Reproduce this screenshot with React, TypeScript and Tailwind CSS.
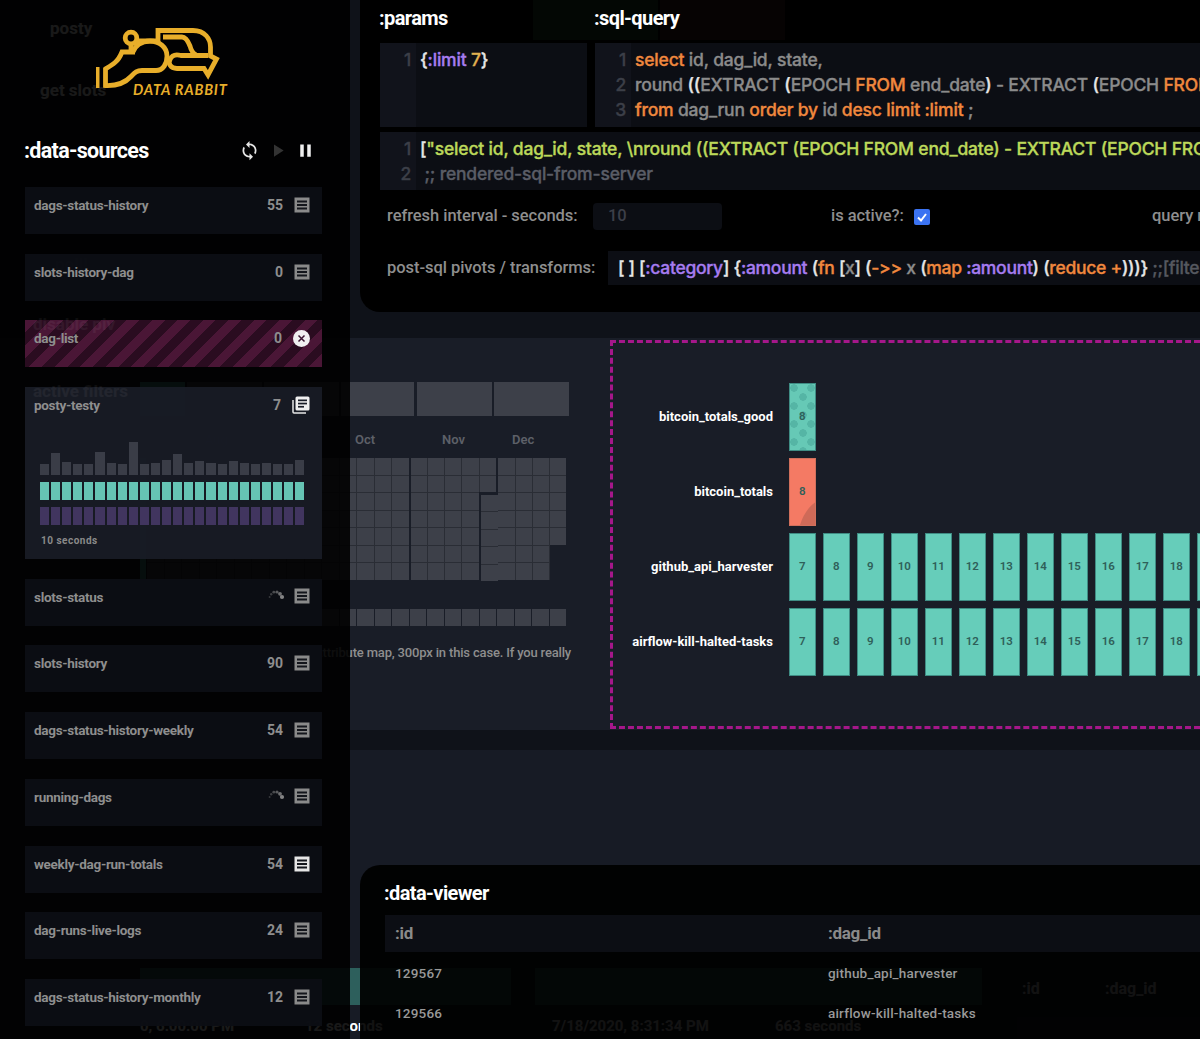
import React from "react";
import { MdSync, MdPause, MdPlayArrow } from "react-icons/md";

const code = "font-['Inter',sans-serif] font-medium text-[17.500px] leading-[25px] tracking-[-0.18px] [-webkit-text-stroke:0.35px_currentColor]";
const ui = "font-['Roboto',sans-serif]";

function Sheet({ bright = false }: { bright?: boolean }) {
  const c = bright ? "#e6e6e6" : "#8a8a8a";
  return (
    <svg width="16" height="16" viewBox="0 0 16 16" className="shrink-0">
      <rect x="0.5" y="0.5" width="15" height="15" fill={c} />
      <rect x="3" y="3.5" width="10" height="2" fill="#14161c" />
      <rect x="3" y="7" width="10" height="2" fill="#14161c" />
      <rect x="3" y="10.5" width="10" height="2" fill="#14161c" />
    </svg>
  );
}

function Copy() {
  return (
    <svg width="18" height="18" viewBox="0 0 18 18" className="shrink-0">
      <path d="M1 4v12a1 1 0 0 0 1 1h12" stroke="#e8e8e8" strokeWidth="1.5" fill="none" />
      <rect x="3.5" y="0.5" width="14" height="14" rx="1.5" fill="#f0f0f0" />
      <rect x="6" y="3.5" width="9" height="1.7" fill="#191d27" />
      <rect x="6" y="6.7" width="9" height="1.7" fill="#191d27" />
      <rect x="6" y="9.9" width="6" height="1.7" fill="#191d27" />
    </svg>
  );
}

function Spinner() {
  const dots = [
    [15, 8, 2.1, 0.85],
    [13, 4.8, 1.9, 0.7],
    [10, 3, 1.6, 0.55],
    [6.8, 3.2, 1.4, 0.45],
    [4.2, 5.2, 1.2, 0.35],
    [2.6, 8, 1, 0.3],
  ];
  return (
    <svg width="18" height="14" viewBox="0 0 18 14" className="shrink-0">
      {dots.map(([x, y, r, o], i) => (
        <circle key={i} cx={x} cy={y} r={r} fill="#9a9a9a" opacity={o} />
      ))}
    </svg>
  );
}

function Closer() {
  return (
    <svg width="17" height="17" viewBox="0 0 17 17" className="shrink-0">
      <circle cx="8.5" cy="8.5" r="8.5" fill="#f0f0f0" />
      <path d="M5.5 5.5l6 6M11.5 5.5l-6 6" stroke="#3a1530" strokeWidth="1.5" />
    </svg>
  );
}

function Logo() {
  const g = "#e8ae2a";
  return (
    <div className="relative ml-[-25px] h-[130px]">
      <svg width="240" height="100" viewBox="0 0 240 100" className="absolute left-0 top-0">
        <g fill="none" stroke={g} strokeWidth="4.8" strokeLinejoin="miter">
          <circle cx="131" cy="38" r="5.8" />
          <path d="M131 44V52" />
          <path d="M137 41H158V30.500H193C205 30.500 210.500 39 210.500 47V56L216.500 59L208 75L204 68.500H177C170 68.500 168 63 170 59.500C172 55 176 54 181 55.500H208" />
          <path d="M163 37H182C186 37 188 41 190 46C191 50 192 53 196 55" />
          <path d="M135 52H122C120 57 118 60 115 62.500C112 65 107 68 105.500 69V85.500C118 86 125 83 131 76.500C135 72 137 70.500 142 70.500H156C163 70.500 167 64 167 56C167 47 159 41 150 41C141 41 135 46 133 52" />
        </g>
        <rect x="96" y="67" width="3.500" height="21" fill={g} />
      </svg>
      <span className="absolute left-[133px] top-[81px] font-['Lato',sans-serif] text-[14.500px] font-bold italic leading-[18px] tracking-[0.8px] text-[#e8ae2a]">DATA RABBIT</span>
    </div>
  );
}

function Card({ name, count, icon, className = "", ghost }: { name: string; count?: string; icon: React.ReactNode; className?: string; ghost?: string }) {
  return (
    <div className={"relative flex h-[47px] items-start justify-between pl-[9px] pr-[12px] pt-[9px] " + className}>
      {ghost && <span className={ui + " absolute left-[8px] top-[-6px] text-[17px] font-bold leading-[20px] text-white/[.05]"}>{ghost}</span>}
      <span className={ui + " relative text-[13.500px] font-bold leading-[18px] tracking-[-0.3px] text-[#8e8e8e]"}>{name}</span>
      <div className="flex items-center gap-[11px]">
        {count !== undefined && <span className={ui + " text-[14px] font-bold leading-[18px] text-[#8e8e8e]"}>{count}</span>}
        {icon}
      </div>
    </div>
  );
}

const barHeights = [11, 22, 13, 11, 11, 23, 12, 11, 33, 11, 12, 15, 21, 12, 14, 12, 11, 14, 12, 11, 12, 11, 11, 15];

function Sidebar() {
  const base = "bg-[#0c0e14]/95";
  return (
    <aside className="absolute left-0 top-0 h-[1039px] w-[350px] bg-black/90 pl-[25px]">
      <Logo />
      <div className="mb-[17px] flex h-[40px] w-[297px] items-center justify-between pr-[6px]">
        <h2 className={ui + " ml-[-1px] mt-[2px] text-[21.500px] font-bold tracking-[-0.7px] text-white"}>:data-sources</h2>
        <div className="flex items-center gap-[7px]">
          <MdSync className="text-[21px] text-[#e6e6e6]" />
          <MdPlayArrow className="text-[21px] text-[#333]" />
          <MdPause className="text-[21px] text-[#f0f0f0]" />
        </div>
      </div>
      <div className="flex w-[297px] flex-col gap-[19.700px]">
        <Card className={base} name="dags-status-history" count="55" icon={<Sheet />} />
        <Card className={base} name="slots-history-dag" count="0" icon={<Sheet />} />
        <Card
          className="bg-[repeating-linear-gradient(135deg,#4a1636_0,#4a1636_9px,#2a0c20_9px,#2a0c20_18px)]"
          name="dag-list"
          count="0"
          icon={<Closer />}
          ghost="disable piv"
        />
        <div className="flex h-[172px] flex-col bg-[#191d27]/90">
          <Card name="posty-testy" count="7" icon={<Copy />} className="!h-[33px]" ghost="active filters" />
          <div className="ml-[15px] mt-[22px] flex h-[33px] items-end gap-[2px]">
            {barHeights.map((h, i) => (
              <div key={i} className="w-[9.100px] bg-[#3a3d47]" style={{ height: h }} />
            ))}
          </div>
          <div className="ml-[15px] mt-[7px] flex gap-[2px]">
            {barHeights.map((_, i) => (
              <div key={i} className="h-[18px] w-[9.100px] bg-[#66c4b4]" />
            ))}
          </div>
          <div className="ml-[15px] mt-[7px] flex gap-[2px]">
            {barHeights.map((_, i) => (
              <div key={i} className="h-[18px] w-[9.100px] bg-[#41355f]" />
            ))}
          </div>
          <span className="ml-[16px] mt-[9px] font-['Roboto',sans-serif] text-[10px] font-bold leading-[14px] tracking-[0.5px] text-[#8a8a8a]">10 seconds</span>
        </div>
        <Card className={base} name="slots-status" icon={<><Spinner /><span className="ml-[-2px]"><Sheet /></span></>} />
        <Card className={base} name="slots-history" count="90" icon={<Sheet />} />
        <Card className={base} name="dags-status-history-weekly" count="54" icon={<Sheet />} />
        <Card className={base} name="running-dags" icon={<><Spinner /><span className="ml-[-2px]"><Sheet /></span></>} />
        <Card className={base} name="weekly-dag-run-totals" count="54" icon={<Sheet bright />} />
        <Card className={base} name="dag-runs-live-logs" count="24" icon={<Sheet />} />
        <Card className={base} name="dags-status-history-monthly" count="12" icon={<Sheet />} />
      </div>
    </aside>
  );
}

function Editor({ lines, gutter = 36, className = "" }: { lines: React.ReactNode[]; gutter?: number; className?: string }) {
  return (
    <div className={"flex overflow-hidden bg-[#0c0e14] " + className}>
      <div className="flex shrink-0 flex-col items-end bg-[#11131b] pr-[5px] pt-[4px]" style={{ width: gutter }}>
        {lines.map((_, i) => (
          <span key={i} className={code + " text-[#3c3f48]"}>{i + 1}</span>
        ))}
      </div>
      <div className="flex min-w-0 flex-1 flex-col pl-[4px] pt-[4px]">
        {lines.map((l, i) => (
          <div key={i} className={code + " whitespace-nowrap text-[#8b8b8b]"}>{l}</div>
        ))}
      </div>
    </div>
  );
}

const O = ({ children }: { children: React.ReactNode }) => <span className="text-[#f0883e]">{children}</span>;
const W = ({ children }: { children: React.ReactNode }) => <span className="text-[#e6e6e6]">{children}</span>;
const P = ({ children }: { children: React.ReactNode }) => <span className="text-[#a67cf0]">{children}</span>;
const G = ({ children }: { children: React.ReactNode }) => <span className="text-[#bcd85a]">{children}</span>;

function TopPanel() {
  return (
    <section className="ml-[360px] h-[312px] w-[840px] overflow-hidden rounded-bl-[20px] bg-black">
      <div className="relative flex h-[43px] items-start pl-[19px]">
        <div className="absolute left-[173px] top-0 h-[40px] w-[125px] bg-[#030704]" />
        <div className="absolute left-[300px] top-0 h-[40px] w-[125px] bg-[#060303]" />
        <h2 className={ui + " relative mt-[4px] w-[215px] text-[20px] font-bold leading-[28px] tracking-[-0.6px] text-white"}>:params</h2>
        <h2 className={ui + " relative mt-[4px] text-[20px] font-bold leading-[28px] tracking-[-0.6px] text-white"}>:sql-query</h2>
      </div>
      <div className="ml-[20px] flex h-[84px] gap-[8px]">
        <Editor
          className="w-[207px]"
          lines={[<><W>{"{"}</W><P>:limit</P> <span className="text-[#e0b050]">7</span><W>{"}"}</W></>]}
        />
        <Editor
          className="min-w-0 flex-1"
          lines={[
            <><O>select</O> id, dag_id, state,</>,
            <>round <W>((</W>EXTRACT <W>(</W>EPOCH <O>FROM</O> end_date<W>)</W> - EXTRACT <W>(</W>EPOCH <O>FROM</O> start_date<W>)))</W></>,
            <><O>from</O> dag_run <O>order by</O> id <O>desc limit :limit</O> ;</>,
          ]}
        />
      </div>
      <Editor
        className="ml-[20px] mt-[5px] h-[58px]"
        lines={[
          <><W>[</W><G>"select id, dag_id, state, \nround ((EXTRACT (EPOCH FROM end_date) - EXTRACT (EPOCH FROM start_date)))"</G></>,
          <span className="text-[#5a5d66]">&nbsp;;; rendered-sql-from-server</span>,
        ]}
      />
      <div className={ui + " ml-[27px] mt-[13px] flex h-[27px] items-center text-[16.500px] font-medium tracking-[-0.05px] text-[#8e8e8e]"}>
        <span className="w-[206px] shrink-0">refresh interval - seconds:</span>
        <div className="flex h-[27px] w-[129px] shrink-0 items-center rounded-[4px] bg-[#0c0e14] pl-[15px] text-[#3c3f48]">10</div>
        <span className="ml-[109px] w-[83px] shrink-0">is active?:</span>
        <div className="flex h-[16px] w-[16px] shrink-0 items-center justify-center rounded-[2px] bg-[#3b73f2]">
          <svg width="12" height="12" viewBox="0 0 12 12">
            <path d="M2 6.500L5 9.500L10 3" stroke="white" strokeWidth="2" fill="none" />
          </svg>
        </div>
        <span className="ml-[222px] shrink-0 whitespace-nowrap">query result</span>
      </div>
      <div className="ml-[27px] mt-[21px] flex h-[34px] items-center">
        <span className={ui + " w-[221px] shrink-0 text-[16.500px] font-medium tracking-[-0.05px] text-[#8e8e8e]"}>post-sql pivots / transforms:</span>
        <div className={code + " flex h-[34px] min-w-0 flex-1 items-center whitespace-nowrap bg-[#0c0e14] pb-[2px] pl-[10px] !tracking-[-0.28px] text-[#8b8b8b]"}>
          <W>[ ] [</W><P>:category</P><W>] {"{"}</W><P>:amount</P>&nbsp;<W>(</W><O>fn</O>&nbsp;<W>[</W>x<W>]</W>&nbsp;<W>(</W><O>-&gt;&gt;</O>&nbsp;x&nbsp;<W>(</W><O>map</O>&nbsp;<P>:amount</P><W>)</W>&nbsp;<W>(</W><O>reduce +</O><W>))){"}"}</W>&nbsp;<span className="text-[#55585f]">;;[filter</span>
        </div>
      </div>
    </section>
  );
}

function Stack({ n, narrow = false }: { n: number; narrow?: boolean }) {
  return (
    <div className="flex flex-col gap-px self-start bg-[#2a2d35]">
      {Array.from({ length: n }, (_, i) => (
        <div key={i} className={(narrow ? "w-[16.250px]" : "w-[16.500px]") + " h-[16.500px] bg-[#3d4049]"} />
      ))}
    </div>
  );
}

function HeatCol({ n, narrow = false }: { n: number; narrow?: boolean }) {
  return (
    <div className="self-start bg-[#2a2d35] pr-px">
      <Stack n={n} narrow={narrow} />
    </div>
  );
}

const months = [
  { t: "Aug", w: 78 },
  { t: "Sep", w: 72 },
  { t: "Oct", w: 87 },
  { t: "Nov", w: 70 },
  { t: "Dec", w: 40 },
];

function Heatmap() {
  return (
    <div className="relative w-[610px] shrink-0 pl-[140px] pt-[44px]">
      <div className="flex h-[34px] gap-[2px]">
        <div className="w-[45px] bg-[#3f8c84]" />
        <div className="w-[75px] bg-[#3d4049]" />
        <div className="w-[75px] bg-[#3d4049]" />
        <div className="w-[73px] bg-[#3d4049]" />
        <div className="ml-[1px] w-[75px] bg-[#3d4049]" />
        <div className="w-[75px] bg-[#3d4049]" />
      </div>
      <div className={ui + " mt-[15px] flex h-[17px] pl-[65px] text-[13px] font-semibold leading-[17px] text-[#5d6068]"}>
        {months.map((m) => (
          <span key={m.t} style={{ width: m.w }}>{m.t}</span>
        ))}
      </div>
      <div className="mt-[10px] flex h-[121px]">
        <div className="mr-px h-[121px] w-[6px] bg-[#3f8c84]" />
        {Array.from({ length: 14 }, (_, i) => <HeatCol key={i} n={7} />)}
        <Stack n={7} />
        <div className="ml-[2.200px] flex">
          <HeatCol n={7} narrow />
          <HeatCol n={7} narrow />
          <HeatCol n={7} narrow />
          <Stack n={7} narrow />
        </div>
        <div className="flex w-[19.800px] shrink-0 flex-col gap-[2.500px]">
          <div className="w-[17.500px] bg-[#2a2d35] pl-[1.250px]"><Stack n={2} narrow /></div>
          <div className="ml-[2.600px]"><HeatCol n={5} narrow /></div>
        </div>
        <div className="flex">
          <HeatCol n={7} narrow />
          <HeatCol n={7} narrow />
          <HeatCol n={7} narrow />
          <Stack n={5} narrow />
        </div>
      </div>
      <div className="mt-[30px] flex gap-px pl-[7px]">
        {Array.from({ length: 24 }, (_, i) => <div key={i} className="h-[16.500px] w-[16.500px] bg-[#3d4049]" />)}
      </div>
      <p className={ui + " mt-[17px] w-[440px] text-[13px] font-medium leading-[20px] tracking-[-0.17px] text-[#8e8e8e]"}>
        all width, you can do it with the attribute map, 300px in this case. If you really need...
      </p>
    </div>
  );
}

const nums = Array.from({ length: 13 }, (_, i) => i + 7);

function Bar({ v, className = "", children }: { v: number; className?: string; children?: React.ReactNode }) {
  return (
    <div className={"relative flex h-[68px] w-[26.500px] shrink-0 items-center justify-center overflow-hidden border border-[#3f8c84] " + className}>
      {children}
      <span className={ui + " relative text-[11.500px] font-semibold text-[#2f5f59]"}>{v}</span>
    </div>
  );
}

function Row({ label, children }: { label: string; children: React.ReactNode }) {
  return (
    <div className="flex h-[68px] items-center">
      <span className={ui + " w-[160px] shrink-0 whitespace-nowrap text-right text-[13px] font-bold text-white"}>{label}</span>
      <div className="ml-[16px] flex gap-[7.500px]">{children}</div>
    </div>
  );
}

function Chart() {
  return (
    <div className="mt-[2px] h-[389px] min-w-0 flex-1 overflow-hidden border-[3px] border-r-0 border-dashed border-[#a5178a] pt-[40px]">
      <div className="flex flex-col gap-[7px]">
        <Row label="bitcoin_totals_good">
          <Bar v={8} className="bg-[#66c9b6] bg-[radial-gradient(circle_at_4px_4px,#55b5a5_3.500px,transparent_4px),radial-gradient(circle_at_13px_13px,#55b5a5_3.500px,transparent_4px)] bg-[length:17px_18px]" />
        </Row>
        <Row label="bitcoin_totals">
          <Bar v={8} className="border-[#d0705c] bg-[#f47a64]">
            <svg className="absolute inset-0" width="26" height="66" viewBox="0 0 26 66">
              <path d="M10 66C13 56 19 47 26 43V66Z" fill="#cf6a58" />
            </svg>
          </Bar>
        </Row>
        <Row label="github_api_harvester">
          {nums.map((n) => <Bar key={n} v={n} className="bg-[#66cdba]" />)}
        </Row>
        <Row label="airflow-kill-halted-tasks">
          {nums.map((n) => <Bar key={n} v={n} className="bg-[#66cdba]" />)}
        </Row>
      </div>
    </div>
  );
}

function Ghost() {
  return (
    <div className="relative h-[289px] bg-[#171b25]">
      <div className="absolute left-[140px] top-[218px] h-[37px] w-[371px] bg-[#2d5f5c]" />
      <div className="absolute left-[535px] top-[218px] h-[37px] w-[447px] bg-[#2d5f5c]" />
      <div className={ui + " absolute left-[140px] top-[265px] w-[1060px] whitespace-nowrap text-[15px] font-bold text-white"}>
        <span className="absolute left-0">0, 6:00:00 PM</span>
        <span className="absolute left-[165px]">12 seconds</span>
        <span className="absolute left-[412px]">7/18/2020, 8:31:34 PM</span>
        <span className="absolute left-[635px]">663 seconds</span>
      </div>
      <div className={ui + " absolute left-[1022px] top-[227px] text-[16px] font-bold text-white"}>:id</div>
      <div className={ui + " absolute left-[1105px] top-[227px] text-[16px] font-bold text-white"}>:dag_id</div>

      <section className="absolute left-[360px] top-[115px] h-[174px] w-[840px] rounded-tl-[20px] bg-black/[.93]">
        <h2 className={ui + " ml-[24px] mt-[14px] text-[20px] font-bold leading-[28px] tracking-[-0.6px] text-white"}>:data-viewer</h2>
        <div className={ui + " ml-[25px] mt-[8px] flex h-[37px] items-center bg-[#0c0e14] pl-[10px] text-[17px] font-bold tracking-[-0.3px] text-[#8a8a8a]"}>
          <span className="w-[433px]">:id</span>
          <span>:dag_id</span>
        </div>
        <div className={ui + " ml-[35px] mt-[11px] flex h-[20px] items-center text-[13.500px] font-medium leading-[20px] tracking-[0.2px] text-[#999]"}>
          <span className="w-[433px]">129567</span>
          <span>github_api_harvester</span>
        </div>
        <div className={ui + " ml-[35px] mt-[20px] flex h-[20px] items-center text-[13.500px] font-medium leading-[20px] tracking-[0.2px] text-[#999]"}>
          <span className="w-[433px]">129566</span>
          <span>airflow-kill-halted-tasks</span>
        </div>
      </section>
    </div>
  );
}

export default function App() {
  return (
    <div className="relative h-[1039px] w-[1200px] overflow-hidden bg-[#0f1219]">
      <div className={ui + " absolute left-[50px] top-[16px] text-[17px] font-bold text-white"}>posty</div>
      <div className={ui + " absolute left-[40px] top-[78px] text-[17px] font-bold text-white"}>get slots</div>
      <div className={ui + " absolute left-[55px] top-[252px] text-[17px] font-bold text-white"}>poll!</div>
      <TopPanel />
      <div className="mt-[26px] flex h-[392px] overflow-hidden bg-[#191d27]">
        <Heatmap />
        <Chart />
      </div>
      <div className="h-[20px]" />
      <Ghost />
      <Sidebar />
    </div>
  );
}
